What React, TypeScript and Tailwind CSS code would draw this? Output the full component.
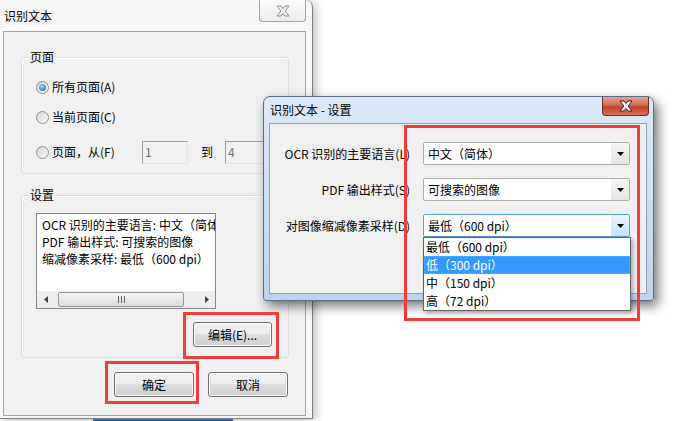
function CloseX({ active }: { active?: boolean }) {
  return (
    <svg width="14" height="12" viewBox="0 0 14 12">
      <polygon
        points="1,1 5,1 7,3.6 9,1 13,1 9.2,6 13,11 9,11 7,8.4 5,11 1,11 4.8,6"
        fill={active ? "#ffffff" : "#f7f7f7"}
        stroke={active ? "#3a1b14" : "#8c8c8c"}
        strokeWidth="1"
        strokeLinejoin="round"
      />
    </svg>
  );
}

function Radio({ checked, label }: { checked?: boolean; label: string }) {
  return (
    <div className="flex h-5 items-center">
      <span className="flex h-[13px] w-[13px] items-center justify-center rounded-full border border-[#8e8f8f] bg-[linear-gradient(135deg,#d4d4d4,#fbfbfb)]">
        {checked && (
          <span className="h-[7px] w-[7px] rounded-full bg-[radial-gradient(circle_at_40%_35%,#9ad6ff,#1c5ea6)]" />
        )}
      </span>
      <span className="ml-[3px] leading-[16px]">{label}</span>
    </div>
  );
}

function WinButton({ label, w }: { label: string; w: string }) {
  return (
    <div
      className={`${w} flex h-[25px] items-center justify-center rounded-[3px] border border-[#707070] bg-[linear-gradient(#f2f2f2_0%,#ebebeb_50%,#dddddd_50%,#cfcfcf_100%)] leading-[16px] shadow-[inset_0_0_0_1px_#fcfcfc]`}
    >
      {label}
    </div>
  );
}

function Arrow({ dir }: { dir: "left" | "right" | "down" }) {
  if (dir === "down")
    return (
      <svg width="7" height="4" viewBox="0 0 7 4">
        <polygon points="0,0 7,0 3.5,4" fill="#000" />
      </svg>
    );
  return (
    <svg width="4" height="7" viewBox="0 0 4 7">
      <polygon points={dir === "left" ? "4,0 4,7 0,3.5" : "0,0 0,7 4,3.5"} fill="#404040" />
    </svg>
  );
}

function Combo({ value, focused }: { value: string; focused?: boolean }) {
  return (
    <div
      className={`flex h-[23px] w-[207px] items-stretch rounded-[2px] border bg-white ${
        focused ? "border-[#569de5]" : "border-[#acacac]"
      }`}
    >
      <span className="flex-1 pl-[4px] leading-[21px]">{value}</span>
      <span
        className={`flex w-[18px] items-center justify-center ${
          focused
            ? "bg-[linear-gradient(#eaf5fd,#c5e2fb)]"
            : "bg-[linear-gradient(#f4f4f4,#e4e4e4)]"
        }`}
      >
        <Arrow dir="down" />
      </span>
    </div>
  );
}

export default function App() {
  return (
    <div className="relative h-[421px] w-[680px] overflow-hidden bg-white text-[12px] text-black font-['Noto_Sans_CJK_SC','Liberation_Sans',sans-serif]">
      {/* taskbar sliver under the first window */}
      <div className="absolute left-[93px] top-[416px] h-[5px] w-[140px] bg-[linear-gradient(#6fb0ee,#1c6ccf)]" />

      {/* Window 1: 识别文本 */}
      <div className="absolute left-0 top-0 flex h-[419px] w-[313px] flex-col rounded-tr-[7px] border-r border-b border-[#7e7e7e] bg-[#f6f6f6] shadow-[3px_2px_8px_rgba(0,0,0,0.25)]">
        <div className="flex h-[31px] items-start justify-between">
          <span className="pl-[4px] pt-[8px] leading-[16px]">识别文本</span>
          <span className="mr-[6px] flex h-[22px] w-[47px] items-center justify-center rounded-b-[4px] border border-t-0 border-[#a3a3a3] bg-[linear-gradient(#fbfbfb,#ececec)]">
            <CloseX />
          </span>
        </div>
        <div className="ml-[3px] flex h-[385px] w-[303px] flex-col border border-[#a5a5a5] bg-[#f0f0f0]">
          {/* 页面 */}
          <div className="relative ml-[17px] mt-[25px] flex h-[117px] w-[268px] flex-col rounded-[3px] border border-[#d5dfe5] pl-[14px] pt-[19px] shadow-[inset_1px_1px_0_#ffffff]">
            <span className="absolute -top-[9px] left-[6px] bg-[#f0f0f0] px-[2px] leading-[16px]">页面</span>
            <Radio checked label="所有页面(A)" />
            <div className="mt-[10px]">
              <Radio label="当前页面(C)" />
            </div>
            <div className="mt-[13px] flex h-[24px] items-center">
              <span className="flex h-[13px] w-[13px] rounded-full border border-[#8e8f8f] bg-[linear-gradient(135deg,#d4d4d4,#fbfbfb)]" />
              <span className="ml-[3px] w-[90px] leading-[16px]">页面，从(F)</span>
              <span className="h-[23px] w-[46px] border border-t-[#a0a0a0] border-l-[#a0a0a0] border-r-[#e3e3e3] border-b-[#e3e3e3] bg-[#f0f0f0] pl-[2px] leading-[20px] text-[#6d6d6d]">
                1
              </span>
              <span className="ml-[13px] leading-[16px]">到</span>
              <span className="ml-[12px] h-[23px] w-[46px] border border-t-[#a0a0a0] border-l-[#a0a0a0] border-r-[#e3e3e3] border-b-[#e3e3e3] bg-[#f0f0f0] pl-[2px] leading-[20px] text-[#6d6d6d]">
                4
              </span>
            </div>
          </div>

          {/* 设置 */}
          <div className="relative ml-[17px] mt-[21px] flex h-[163px] w-[268px] flex-col rounded-[3px] border border-[#d5dfe5] shadow-[inset_1px_1px_0_#ffffff]">
            <span className="absolute -top-[9px] left-[6px] bg-[#f0f0f0] px-[2px] leading-[16px]">设置</span>
            <div className="ml-[14px] mt-[17px] flex h-[96px] w-[180px] flex-col border border-[#828790] bg-white">
              <div className="flex-1 overflow-hidden whitespace-nowrap pl-[5px] pt-[2px] leading-[17px]">
                <div>OCR 识别的主要语言: 中文（简体）</div>
                <div>PDF 输出样式: 可搜索的图像</div>
                <div>缩减像素采样: 最低（600 dpi）</div>
              </div>
              <div className="flex h-[17px] items-center bg-[#ededed]">
                <span className="flex w-[17px] justify-center">
                  <Arrow dir="left" />
                </span>
                <span className="ml-[4px] flex h-[15px] w-[126px] items-center justify-center gap-[2px] rounded-[2px] border border-[#979797] bg-[linear-gradient(#f6f6f6,#dadada)]">
                  <span className="h-[7px] w-px bg-[#606060]" />
                  <span className="h-[7px] w-px bg-[#606060]" />
                  <span className="h-[7px] w-px bg-[#606060]" />
                </span>
                <span className="flex-1" />
                <span className="flex w-[17px] justify-center">
                  <Arrow dir="right" />
                </span>
              </div>
            </div>
            <div className="mr-[16px] mt-[13px] self-end">
              <WinButton label="编辑(E)..." w="w-[79px]" />
            </div>
          </div>

          <div className="mt-[14px] flex justify-end gap-[14px] pr-[17px]">
            <WinButton label="确定" w="w-[80px]" />
            <WinButton label="取消" w="w-[80px]" />
          </div>
        </div>
      </div>

      {/* Window 2: 识别文本 - 设置 */}
      <div className="absolute left-[263px] top-[96px] flex h-[205px] w-[391px] flex-col rounded-t-[7px] rounded-b-[3px] border border-[#5b6e86] bg-[linear-gradient(#dde9f7,#bcd4ec)] shadow-[4px_5px_12px_rgba(0,0,0,0.55)]">
        <div className="flex h-[26px] items-start justify-between">
          <span className="pl-[6px] pt-[5px] leading-[16px]">识别文本 - 设置</span>
          <span className="mr-[4px] flex h-[19px] w-[47px] items-center justify-center rounded-b-[4px] border border-t-0 border-[#6a2a1e] bg-[linear-gradient(#e8a493_0%,#d46a55_45%,#c2402a_55%,#d9705a_100%)]">
            <CloseX active />
          </span>
        </div>
        <div className="relative ml-[5px] flex h-[171px] w-[378px] flex-col border border-[#8ea3bb] bg-[#f0f0f0] pr-[16px] pt-[18px]">
          <div className="flex h-[23px] items-center">
            <span className="w-[140px] text-right leading-[16px]">OCR 识别的主要语言(L)</span>
            <div className="ml-[13px]">
              <Combo value="中文（简体）" />
            </div>
          </div>
          <div className="mt-[13px] flex h-[23px] items-center">
            <span className="w-[140px] text-right leading-[16px]">PDF 输出样式(S)</span>
            <div className="ml-[13px]">
              <Combo value="可搜索的图像" />
            </div>
          </div>
          <div className="mt-[13px] flex h-[23px] items-center">
            <span className="w-[140px] text-right leading-[16px]">对图像缩减像素采样(D)</span>
            <div className="relative ml-[13px]">
              <Combo value="最低（600 dpi）" focused />
              <div className="absolute left-0 top-full z-10 w-[208px] border border-[#646464] bg-white shadow-[2px_2px_4px_rgba(0,0,0,0.3)]">
                <div className="h-[18px] pl-[2px] leading-[18px]">最低（600 dpi）</div>
                <div className="h-[18px] border border-dotted border-[#d89a48] bg-[#3399ff] pl-[1px] leading-[16px] text-white">
                  低（300 dpi）
                </div>
                <div className="h-[18px] pl-[2px] leading-[18px]">中（150 dpi）</div>
                <div className="h-[18px] pl-[2px] leading-[18px]">高（72 dpi）</div>
              </div>
            </div>
          </div>
        </div>
      </div>

      {/* red highlight marks */}
      <div className="pointer-events-none absolute left-[404px] top-[125px] h-[196px] w-[236px] border-[3px] border-[#f23b3b]" />
      <div className="pointer-events-none absolute left-[183px] top-[312px] h-[47px] w-[96px] border-[3px] border-[#f23b3b]" />
      <div className="pointer-events-none absolute left-[105px] top-[361px] h-[43px] w-[94px] border-[3px] border-[#f23b3b]" />
    </div>
  );
}
